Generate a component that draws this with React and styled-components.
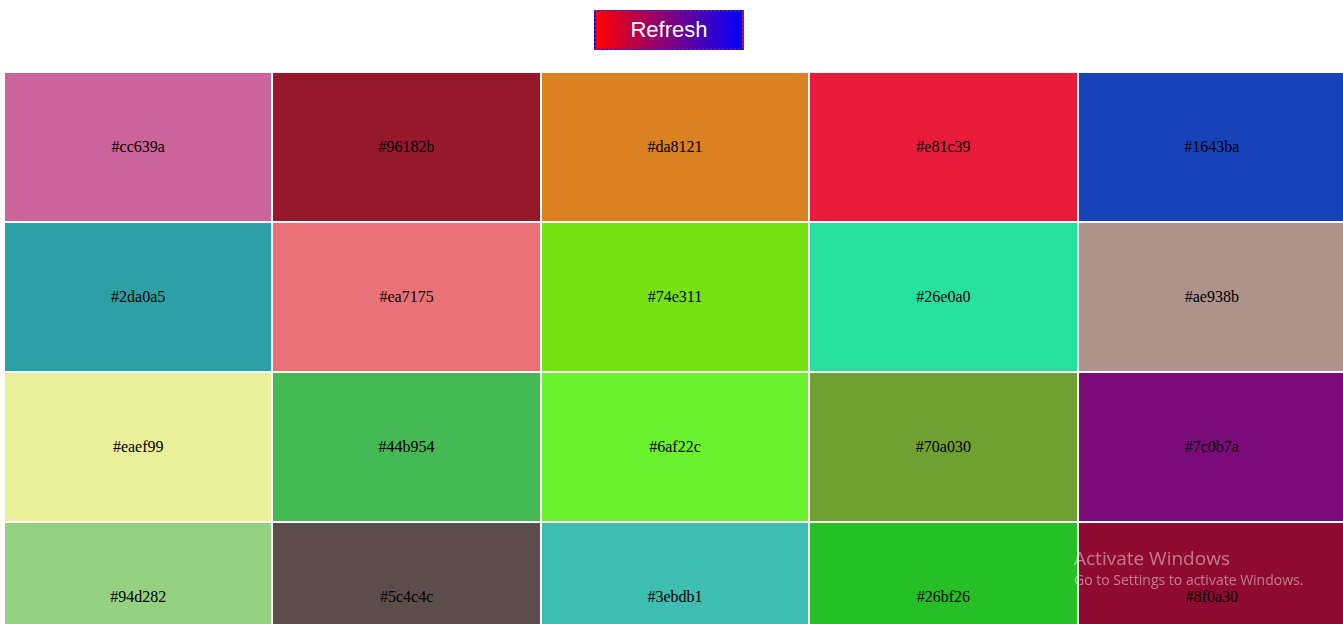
import styled, { createGlobalStyle } from "styled-components"

const colors = [
	"#cc639a", "#96182b", "#da8121", "#e81c39", "#1643ba",
	"#2da0a5", "#ea7175", "#74e311", "#26e0a0", "#ae938b",
	"#eaef99", "#44b954", "#6af22c", "#70a030", "#7c0b7a",
	"#94d282", "#5c4c4c", "#3ebdb1", "#26bf26", "#8f0a30",
]

const Global = createGlobalStyle`
	body {
		margin: 0;
		background: #fff;
		overflow: hidden;
	}
`

const App = () => {

	return (

		<Page>

			<Global />

			<div className="top">

				<RefreshButton>Refresh</RefreshButton>

			</div>

			<Grid>

				{colors.map(c => <Swatch key={c} $bg={c}>{c}</Swatch>)}

			</Grid>

			<Watermark>

				<div className="big">Activate Windows</div>

				<div className="small">Go to Settings to activate Windows.</div>

			</Watermark>

		</Page>

	)

}

const Page = styled.div`
	font-family: "Liberation Serif", "Times New Roman", serif;

	.top {
		display: flex;
		justify-content: center;
		padding-top: 10px;
		padding-right: 5px;
		height: 73px;
		box-sizing: border-box;
	}
`

const RefreshButton = styled.button`
	width: 150px;
	height: 40px;
	box-sizing: border-box;
	border: 2px dotted #5a18b0;
	background: linear-gradient(90deg, #ff0000, #0000ff);
	color: #fff;
	font-family: "Liberation Sans", Arial, sans-serif;
	font-size: 22px;
	padding: 0;
	cursor: pointer;
`

const Grid = styled.div`
	display: grid;
	grid-template-columns: repeat(5, 1fr);
	gap: 2px;
	padding-left: 5px;
	margin-right: -2px;
`

const Swatch = styled.div`
	height: 148px;
	background-color: ${p => p.$bg};
	display: flex;
	align-items: center;
	justify-content: center;
	font-size: 16px;
	color: #000;
`

const Watermark = styled.div`
	position: fixed;
	left: 1074px;
	top: 545px;
	color: rgba(255, 255, 255, 0.45);
	font-family: "Open Sans", "Noto Sans", sans-serif;
	pointer-events: none;

	.big {
		font-size: 19px;
		line-height: 26px;
	}

	.small {
		font-size: 14px;
		line-height: 18px;
	}
`

export default App
